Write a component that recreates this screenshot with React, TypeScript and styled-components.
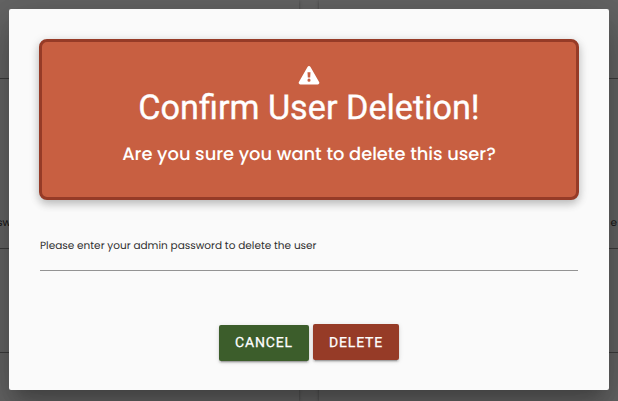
import React from "react";
import styled, { createGlobalStyle } from "styled-components";

const GlobalStyle = createGlobalStyle`
  *, *::before, *::after { box-sizing: border-box; }
  body {
    margin: 0;
    overflow: hidden;
    background: #646464;
    text-rendering: geometricPrecision;
  }
`;

const bodyFont = `Poppins, Inter, sans-serif`;

const Screen = styled.div`
  position: relative;
  width: 618px;
  height: 401px;
  overflow: hidden;
  padding: 9px;
  background: #646464;
`;

/* Dimmed form cards that show behind the dialog */
const Backdrop = styled.div`
  position: absolute;
  inset: 0;
  display: grid;
  grid-template-columns: 299px 299px;
  column-gap: 20px;
`;

const BackCard = styled.div`
  display: flex;
  flex-direction: column;
  box-shadow: 0 1px 3px rgba(0, 0, 0, 0.35);
`;

const BackField = styled.div<{ $height: number; $end?: boolean }>`
  height: ${(p) => p.$height}px;
  border-bottom: 1px solid #3c3c3c;
  display: flex;
  align-items: flex-end;
  justify-content: ${(p) => (p.$end ? "flex-end" : "flex-start")};
  padding: 0 1px 17px 0;
  font: 400 10.5px/16px ${bodyFont};
  color: #151515;
`;

const BackLabel = styled.span<{ $shift?: number }>`
  margin-left: ${(p) => p.$shift ?? 0}px;
`;

const Dialog = styled.section`
  position: relative;
  width: 600px;
  height: 381px;
  padding: 30px 31px 0 30px;
  border-radius: 2px;
  background: #fafafa;
  box-shadow: 0 11px 15px -7px rgba(0, 0, 0, 0.2),
    0 24px 38px 3px rgba(0, 0, 0, 0.14), 0 9px 46px 8px rgba(0, 0, 0, 0.12);
`;

const Alert = styled.header`
  width: 540px;
  height: 161px;
  border: 3px solid #963b27;
  border-radius: 8px;
  background: #c85f41;
  color: #fff;
  display: flex;
  flex-direction: column;
  align-items: center;
  padding-top: 24px;
  box-shadow: 0 4px 8px rgba(0, 0, 0, 0.2), 0 2px 12px rgba(0, 0, 0, 0.1);
`;

const WarningIcon = styled.svg`
  display: block;
  width: 22px;
  height: 19px;
`;

const Title = styled.h1`
  margin: 2px 0 0;
  font: 400 34.2px/42px Roboto, sans-serif;
  -webkit-text-stroke: 0.35px #fff;
  white-space: nowrap;
`;

const Question = styled.p`
  margin: 12px 0 0;
  font: 500 17.85px/27px ${bodyFont};
  white-space: nowrap;
`;

const Field = styled.label`
  display: block;
  width: 538px;
  height: 71px;
  margin-left: 1px;
  padding-top: 38px;
  border-bottom: 1px solid #939393;
  font: 400 10.5px/16px ${bodyFont};
  color: #303030;
`;

const Actions = styled.footer`
  display: flex;
  justify-content: center;
  gap: 4px;
  padding-top: 53px;
`;

const Button = styled.button<{ $tone: "green" | "red" }>`
  width: ${(p) => (p.$tone === "green" ? 90 : 86)}px;
  height: 36px;
  margin: ${(p) => (p.$tone === "green" ? "1px 0 0" : "0")};
  padding: ${(p) => (p.$tone === "green" ? "0 0 0 1px" : "2px 0 0 1px")};
  border: 0;
  border-radius: 2px;
  background: ${(p) => (p.$tone === "green" ? "#3c5d2b" : "#963b27")};
  color: #fff;
  font: 400 14px/34px Roboto, sans-serif;
  letter-spacing: 0.85px;
  -webkit-text-stroke: 0.25px #fff;
  text-rendering: geometricPrecision;
  text-transform: uppercase;
  box-shadow: 0 3px 1px -2px rgba(0, 0, 0, 0.2), 0 2px 2px rgba(0, 0, 0, 0.14),
    0 1px 5px rgba(0, 0, 0, 0.12);
`;

export default function App() {
  return (
    <>
      <GlobalStyle />
      <Screen>
        <Backdrop aria-hidden="true">
          <BackCard>
            <BackField $height={79} />
            <BackField $height={170}><BackLabel $shift={-3}>sw</BackLabel></BackField>
            <BackField $height={104} />
          </BackCard>
          <BackCard>
            <BackField $height={79} />
            <BackField $height={170} $end><BackLabel>e</BackLabel></BackField>
            <BackField $height={104} />
          </BackCard>
        </Backdrop>
        <Dialog role="dialog">
          <Alert>
            <WarningIcon viewBox="0 0 22 19">
              <path
                fill="currentColor"
                fillRule="evenodd"
                d="M9.5.9a1.75 1.75 0 0 1 3 0l8.6 15a1.75 1.75 0 0 1-1.5 2.6H2.4a1.75 1.75 0 0 1-1.5-2.6ZM9.5 6.2l.3 5.4h2.4l.3-5.4ZM11 12.6a1.55 1.55 0 1 0 0 3.1 1.55 1.55 0 0 0 0-3.1Z"
              />
            </WarningIcon>
            <Title>Confirm User Deletion!</Title>
            <Question>Are you sure you want to delete this user?</Question>
          </Alert>
          <Field>Please enter your admin password to delete the user</Field>
          <Actions>
            <Button $tone="green">Cancel</Button>
            <Button $tone="red">Delete</Button>
          </Actions>
        </Dialog>
      </Screen>
    </>
  );
}
